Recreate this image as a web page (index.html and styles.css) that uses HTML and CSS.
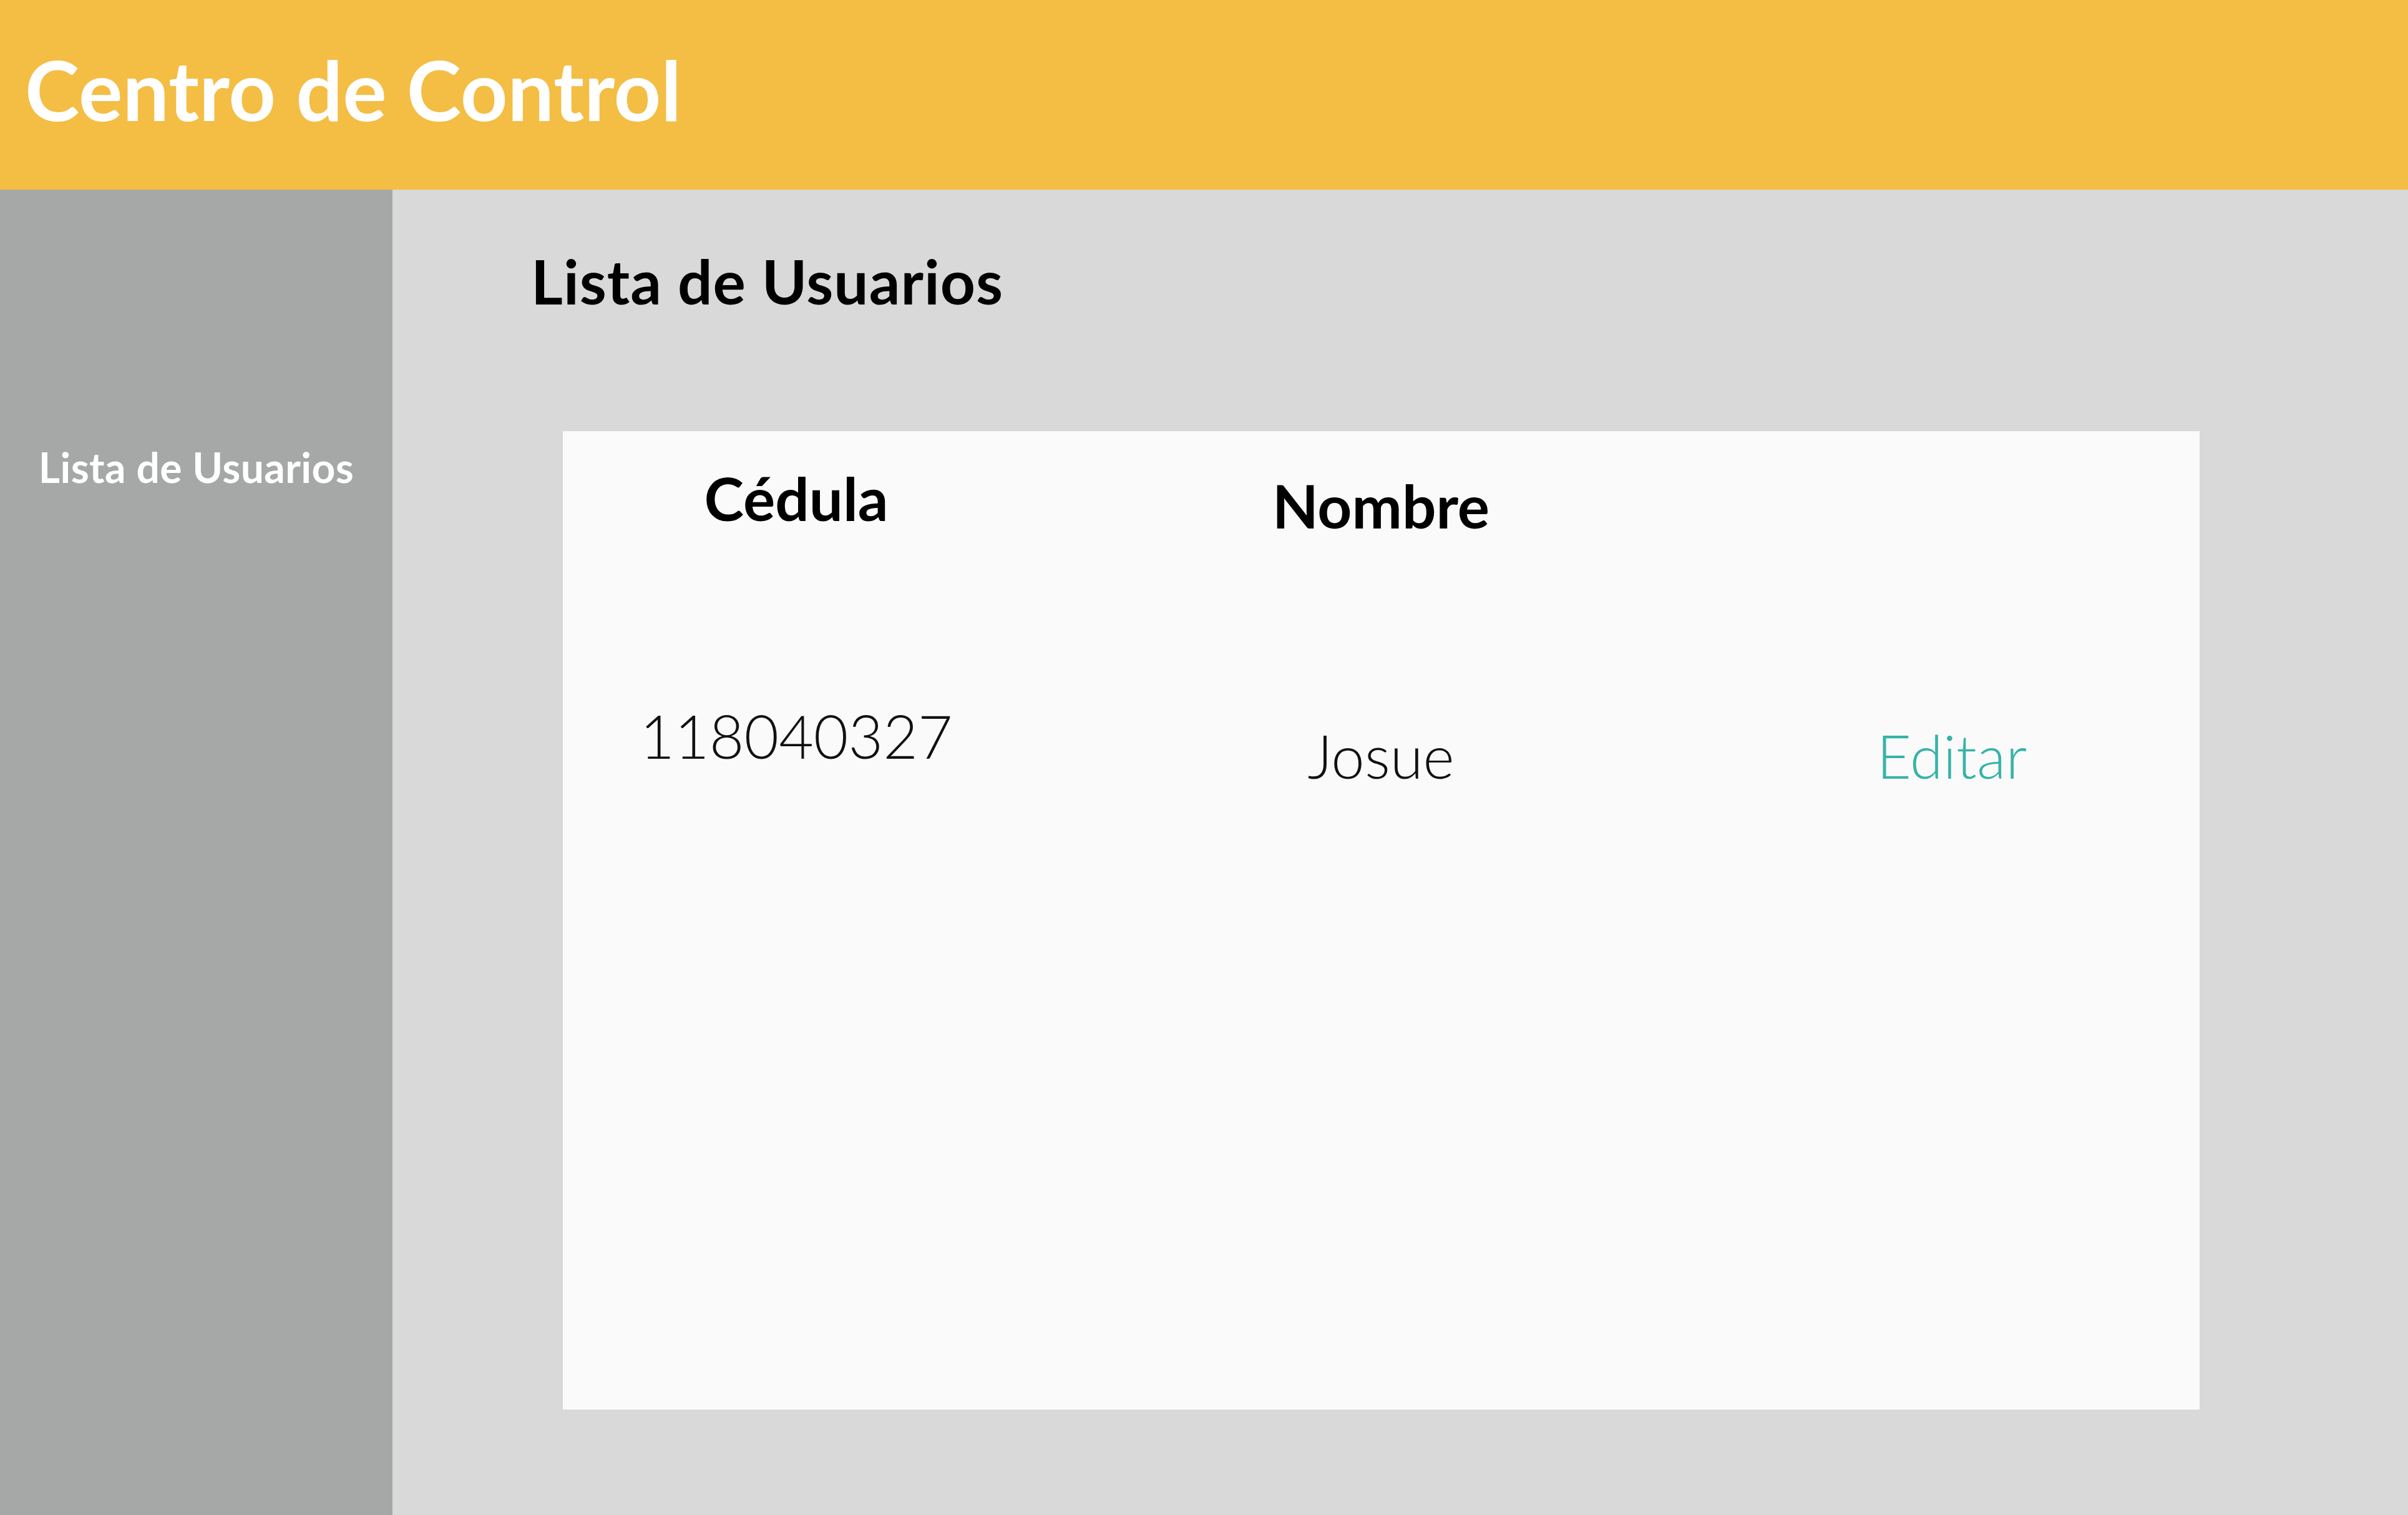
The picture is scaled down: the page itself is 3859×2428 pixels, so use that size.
FILE: index.html
```html
<!DOCTYPE html>
<html lang="es">
<head>
<meta charset="utf-8">
<title>Centro de Control</title>
<link rel="stylesheet" href="styles.css">
</head>
<body>
<header class="topbar">
  <h1 class="brand">Centro de Control</h1>
</header>
<div class="layout">
  <aside class="sidebar">
    <a class="nav-link" href="#">Lista de Usuarios</a>
  </aside>
  <main class="content">
    <h2 class="page-title">Lista de Usuarios</h2>
    <section class="card">
      <div class="table">
        <div class="cell head">Cédula</div>
        <div class="cell head shift-sm">Nombre</div>
        <div class="cell head"></div>
        <div class="cell data row-gap">118040327</div>
        <div class="cell data row-gap shift-lg">Josue</div>
        <div class="cell data row-gap shift-lg"><a class="edit" href="#">Editar</a></div>
      </div>
    </section>
  </main>
</div>
</body>
</html>
```
FILE: styles.css
```css
* { box-sizing: border-box; }
html, body { margin: 0; padding: 0; }
body {
  width: 3859px;
  height: 2428px;
  overflow: hidden;
  font-family: "Lato", "Open Sans", "Noto Sans", sans-serif;
  background: #d9d9d9;
  display: flex;
  flex-direction: column;
}
.topbar {
  height: 304px;
  flex: 0 0 304px;
  background: #f4bd44;
  padding: 77px 0 0 40px;
}
.brand {
  margin: 0;
  font-size: 132px;
  line-height: 1;
  font-weight: 700;
  color: #ffffff;
}
.layout {
  flex: 1;
  display: flex;
}
.sidebar {
  width: 629px;
  flex: 0 0 629px;
  background: #a6a8a7;
  padding-top: 412px;
  text-align: center;
}
.nav-link {
  display: block;
  font-size: 66px;
  line-height: 1;
  font-weight: 700;
  letter-spacing: 0.4px;
  color: #ffffff;
  text-decoration: none;
}
.content {
  flex: 1;
  padding: 97px 0 0 222px;
}
.page-title {
  margin: 0;
  font-size: 98px;
  line-height: 1;
  font-weight: 700;
  letter-spacing: 1px;
  color: #000000;
}
.card {
  margin: 192px 0 0 51px;
  width: 2623px;
  height: 1568px;
  background: #fafafa;
  padding-top: 59px;
}
.table {
  display: grid;
  grid-template-columns: 748px 1126px 704px;
  align-items: start;
}
.cell {
  text-align: center;
  font-size: 96px;
  line-height: 1;
  color: #000000;
  min-height: 96px;
}
.head { font-weight: 700; }
.data { font-weight: 300; color: #111111; }
.row-gap { margin-top: 273px; }
.shift-sm { margin-top: 12px; }
.row-gap.shift-lg { margin-top: 305px; }
.edit {
  color: #36b3a8;
  text-decoration: none;
}
```
